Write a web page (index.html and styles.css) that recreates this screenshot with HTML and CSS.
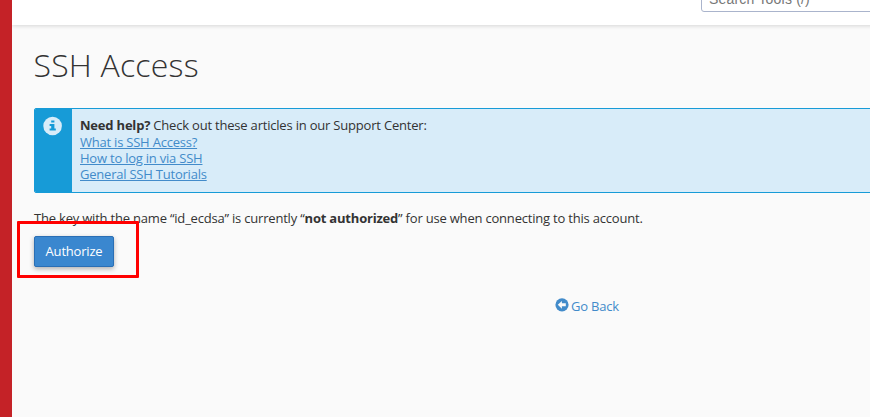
FILE: index.html
```
<!DOCTYPE html>
<html lang="en">
<head>
<meta charset="utf-8">
<title>SSH Access</title>
<link rel="stylesheet" href="styles.css">
</head>
<body>
<div class="app">
  <aside class="sidebar"></aside>
  <div class="page">
    <header class="topbar"><div class="search">Search Tools (/)</div></header>
    <main class="content">
      <h1>SSH Access</h1>
      <section class="callout">
        <div class="callout-icon">
          <svg width="20" height="20" viewBox="0 0 20 20"><circle cx="9.6" cy="10" r="9.3" fill="#d8ecf9"/><path d="M8.2 4.6h3.2v2H8.2zM6.6 8h4.8v4.6h1.4v2H6.6v-2h1.6V10H6.6z" fill="#179bd7"/></svg>
        </div>
        <div class="callout-body">
          <div class="lead"><b>Need help?</b> Check out these articles in our Support Center:</div>
          <a href="#">What is SSH Access?</a>
          <a href="#">How to log in via SSH</a>
          <a href="#">General SSH Tutorials</a>
        </div>
      </section>
      <p class="status">The key with the name “id_ecdsa” is currently “<b>not authorized</b>” for use when connecting to this account.</p>
      <div class="action"><button class="authorize">Authorize</button><span class="highlight"></span></div>
      <a class="back" href="#"><svg width="14" height="14" viewBox="0 0 14 14"><circle cx="7" cy="6.8" r="6.6" fill="#428bca"/><path d="M2.8 6.8L6.9 2.9v2.4h3.9v3H6.9v2.4z" fill="#fafafa"/></svg><span>Go Back</span></a>
    </main>
  </div>
</div>
</body>
</html>
```
FILE: styles.css
```
* { box-sizing: border-box; }
body { margin: 0; background: #fafafa; color: #333; font: 13px/16px "Open Sans", sans-serif; letter-spacing: -0.2px; }
.app { display: flex; width: 100%; height: 417px; overflow: hidden; }
.sidebar { width: 12px; flex: none; background: #c42227; position: relative; z-index: 1; }
.page { width: 1150px; flex: none; }
.topbar { height: 25px; overflow: hidden; background: #fff; box-shadow: 0 1px 4px rgba(0, 0, 0, .15); padding-left: 689px; }
.search { width: 240px; height: 34px; margin-top: -22px; border: 1px solid #aab4cc; border-radius: 3px; padding: 12px 7px 0; font: 14px/16px "Liberation Sans", sans-serif; letter-spacing: .2px; color: #777; }
.content { padding: 20px 22px 0; }
h1 { margin: 0 0 0 -0.5px; font-size: 32px; line-height: 40px; font-weight: 300; letter-spacing: .2px; }
.callout { display: flex; height: 85px; margin-top: 23px; border: 1px solid #179bd7; border-radius: 2px; background: #d8ecf9; overflow: hidden; }
.callout-icon { width: 37px; padding: 7px 8px; background: #179bd7; }
.callout-body { padding: 8px; }
.lead { margin-bottom: 1px; }
.callout-body a { display: block; width: max-content; color: #428bca; letter-spacing: -0.22px; }
.status { margin: 17px 0 10px; }
.action { position: relative; height: 31px; }
.authorize { display: block; width: 80px; height: 31px; padding: 0 0 2px; border: 1px solid #2a6fb5; border-radius: 2px; background: #3a87cf; color: #fff; font: inherit; letter-spacing: inherit; box-shadow: 0 2px 5px rgba(0, 0, 0, .3); }
.highlight { position: absolute; left: -17px; top: -15px; width: 122px; height: 57px; border: 3px solid #f00; border-radius: 1px; }
.back { display: flex; gap: 2px; margin: 31px auto 0; width: max-content; color: #428bca; text-decoration: none; }
```
